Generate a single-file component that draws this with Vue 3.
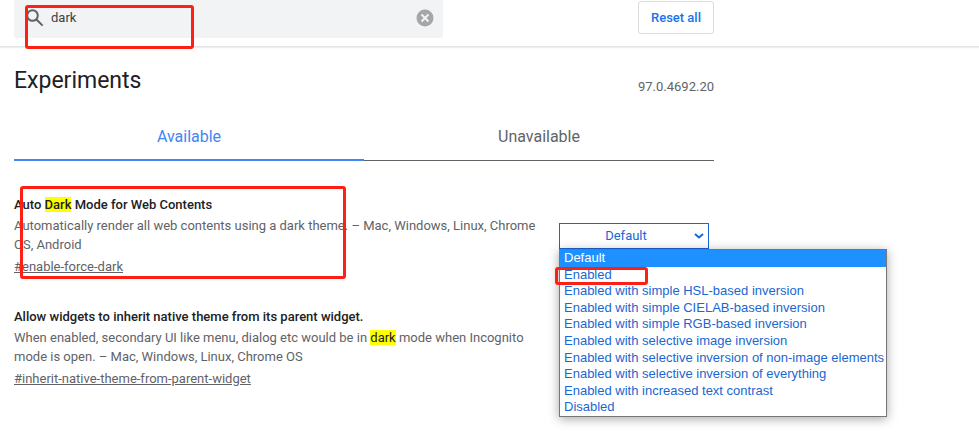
<script setup>
import { ref, computed } from 'vue';

const keyword = ref('dark');
const activeTab = ref('available');
const menuOpen = ref(true);
const selected = ref('Default');

const options = [
  'Default',
  'Enabled',
  'Enabled with simple HSL-based inversion',
  'Enabled with simple CIELAB-based inversion',
  'Enabled with simple RGB-based inversion',
  'Enabled with selective image inversion',
  'Enabled with selective inversion of non-image elements',
  'Enabled with selective inversion of everything',
  'Enabled with increased text contrast',
  'Disabled'
];

// Only the first match in each experiment is highlighted
const experiments = [
  {
    id: 'enable-force-dark',
    title: 'Auto Dark Mode for Web Contents',
    text: 'Automatically render all web contents using a dark theme. – Mac, Windows, Linux, Chrome OS, Android',
    hasSelect: true
  },
  {
    id: 'inherit-native-theme-from-parent-widget',
    title: 'Allow widgets to inherit native theme from its parent widget.',
    text: 'When enabled, secondary UI like menu, dialog etc would be in dark mode when Incognito mode is open. – Mac, Windows, Linux, Chrome OS',
    hasSelect: false
  }
];

function split(text) {
  const word = keyword.value.trim().toLowerCase();
  const at = word ? text.toLowerCase().indexOf(word) : -1;
  if (at < 0) return { before: text, match: '', after: '' };
  return {
    before: text.slice(0, at),
    match: text.slice(at, at + word.length),
    after: text.slice(at + word.length)
  };
}

const rows = computed(() => experiments.map((item) => {
  const title = split(item.title);
  const text = title.match ? { before: item.text, match: '', after: '' } : split(item.text);
  return { ...item, title, text };
}));

function pick(option) {
  selected.value = option;
  menuOpen.value = false;
}
</script>

<template>
  <div class="page">
    <header class="header">
      <div class="header-inner">
        <div class="search">
          <svg class="search-icon" viewBox="0 0 18 18" aria-hidden="true">
            <circle cx="6.5" cy="6.5" r="5.3" />
            <path d="M10.5 10.5 L16.6 16.6" />
          </svg>
          <input v-model="keyword" class="search-input" type="text" aria-label="Search flags" />
          <button class="clear" aria-label="Clear search" @click="keyword = ''">
            <svg viewBox="0 0 18 18" aria-hidden="true">
              <circle cx="9" cy="9" r="8.5" />
              <path d="M5.5 5.5 L12.5 12.5 M12.5 5.5 L5.5 12.5" />
            </svg>
          </button>
        </div>
        <button class="reset">Reset all</button>
      </div>
      <div class="mark mark-search"></div>
    </header>

    <main class="content">
      <div class="heading">
        <h1>Experiments</h1>
        <span class="version">97.0.4692.20</span>
      </div>

      <div class="tabs">
        <button
          class="tab"
          :class="{ active: activeTab === 'available' }"
          @click="activeTab = 'available'"
        >Available</button>
        <button
          class="tab"
          :class="{ active: activeTab === 'unavailable' }"
          @click="activeTab = 'unavailable'"
        >Unavailable</button>
      </div>

      <section v-for="item in rows" :key="item.id" class="experiment">
        <div class="info">
          <h2>{{ item.title.before }}<mark v-if="item.title.match">{{ item.title.match }}</mark>{{ item.title.after }}</h2>
          <p>{{ item.text.before }}<mark v-if="item.text.match">{{ item.text.match }}</mark>{{ item.text.after }}</p>
          <a :href="'#' + item.id">#{{ item.id }}</a>
        </div>
        <div class="action">
          <div v-if="item.hasSelect" class="select-box">
            <select v-model="selected" :aria-label="item.id" @mousedown.prevent="menuOpen = !menuOpen">
              <option v-for="option in options" :key="option">{{ option }}</option>
            </select>
            <svg class="arrow" viewBox="0 0 10 6" aria-hidden="true">
              <path d="M1 1 L5 4.5 L9 1" />
            </svg>
            <ul v-if="menuOpen" class="menu" role="listbox" aria-label="States">
              <li
                v-for="option in options"
                :key="option"
                role="option"
                :aria-selected="option === selected"
                :class="{ current: option === selected }"
                @click="pick(option)"
              >{{ option }}</li>
            </ul>
            <div class="mark mark-option"></div>
          </div>
        </div>
        <div v-if="item.hasSelect" class="mark mark-info"></div>
      </section>
    </main>
  </div>
</template>

<style>
body {
  margin: 0;
  background: #fff;
}
</style>

<style scoped>
.page {
  min-height: 100vh;
  color: #202124;
  font-family: Roboto, "Liberation Sans", sans-serif;
  font-size: 13px;
}

button,
input,
select {
  font-family: inherit;
  font-size: 13px;
}

button {
  cursor: pointer;
}

.header {
  position: relative;
  border-bottom: 1px solid #e4e4e4;
  box-shadow: 0 1px 1px #eee;
}

.header-inner {
  display: flex;
  align-items: flex-start;
  justify-content: space-between;
  max-width: 700px;
  height: 46px;
  margin: 0 14px;
}

.search {
  display: flex;
  align-items: center;
  flex: 0 1 429px;
  box-sizing: border-box;
  height: 38px;
  padding: 0 9px 2px 12px;
  border-radius: 0 0 3px 3px;
  background: #f1f3f4;
}

.search-icon {
  width: 18px;
  height: 18px;
  fill: none;
  stroke: #5f6368;
  stroke-width: 2;
}

.search-input {
  flex: 1;
  min-width: 0;
  padding: 0 7px 2px;
  border: none;
  outline: none;
  background: transparent;
  color: #3c4043;
}

.clear {
  width: 18px;
  height: 18px;
  padding: 0;
  border: none;
  background: transparent;
}

.clear svg {
  display: block;
  fill: #a4a7a9;
  stroke: none;
}

.clear path {
  stroke: #f1f3f4;
  stroke-width: 2;
}

.reset {
  height: 33px;
  margin-top: 1px;
  padding: 0 12px;
  border: 1px solid #dadce0;
  border-radius: 3px;
  background: #fff;
  color: #1a73e8;
  font-weight: 500;
}

.content {
  max-width: 700px;
  margin: 0 14px;
}

.heading {
  display: flex;
  align-items: flex-end;
  justify-content: space-between;
  padding-top: 16px;
}

h1 {
  margin: 0;
  font-size: 23px;
  font-weight: 400;
  line-height: 36px;
}

.version {
  padding-bottom: 4px;
  color: #5f6368;
  line-height: 16px;
}

.tabs {
  display: flex;
  margin-top: 12px;
}

.tab {
  flex: 1;
  height: 50px;
  padding: 2px 0 0;
  border: none;
  border-bottom: 1px solid #5f6368;
  background: transparent;
  color: #5f6368;
  font-size: 16px;
}

.tab.active {
  border-bottom: 2px solid #4285f4;
  color: #4285f4;
}

.experiment {
  position: relative;
  display: flex;
  align-items: center;
  justify-content: space-between;
  margin-top: 34px;
}

.experiment + .experiment {
  margin-top: 30px;
}

.info {
  flex: 0 1 530px;
}

h2 {
  margin: 0;
  font-size: 13px;
  font-weight: 500;
  line-height: 20px;
}

p {
  margin: 1px 0 3px;
  color: #5f6368;
  line-height: 19px;
}

a {
  display: block;
  color: #5f6368;
  line-height: 20px;
}

mark {
  background: #ff0;
  color: #202124;
}

.action {
  flex: 0 0 155px;
}

.select-box {
  position: relative;
  width: 150px;
}

select {
  display: block;
  box-sizing: border-box;
  width: 100%;
  height: 26px;
  padding: 0 16px 2px 0;
  border: 1px solid #1967d2;
  border-radius: 0;
  outline: none;
  appearance: none;
  background: #fff;
  color: #1967d2;
  text-align-last: center;
}

.arrow {
  position: absolute;
  top: 10px;
  right: 5px;
  width: 10px;
  height: 6px;
  fill: none;
  stroke: #1967d2;
  stroke-width: 2;
  pointer-events: none;
}

.menu {
  position: absolute;
  top: 26px;
  left: 0;
  z-index: 1;
  display: grid;
  grid-auto-rows: 1fr;
  box-sizing: border-box;
  width: 328px;
  height: 168px;
  margin: 0;
  padding: 0;
  border: 1px solid #767676;
  background: #fff;
  box-shadow: 0 2px 10px rgba(0, 0, 0, 0.35);
  color: #1967d2;
  font-family: "Liberation Sans", Arial, sans-serif;
  line-height: 16px;
  list-style: none;
}

.menu li {
  padding-left: 4px;
  white-space: nowrap;
  cursor: default;
}

.menu .current {
  background: #1e90ff;
  color: #fff;
}

/* red callout frames over the page */
.mark {
  position: absolute;
  z-index: 2;
  box-sizing: border-box;
  border: 3px solid #ff2013;
  border-radius: 3px;
  pointer-events: none;
}

.mark-search {
  top: 5px;
  left: 25px;
  width: 169px;
  height: 44px;
}

.mark-info {
  top: -9px;
  left: 6px;
  width: 326px;
  height: 93px;
}

.mark-option {
  top: 44px;
  left: -4px;
  width: 93px;
  height: 18px;
}
</style>
